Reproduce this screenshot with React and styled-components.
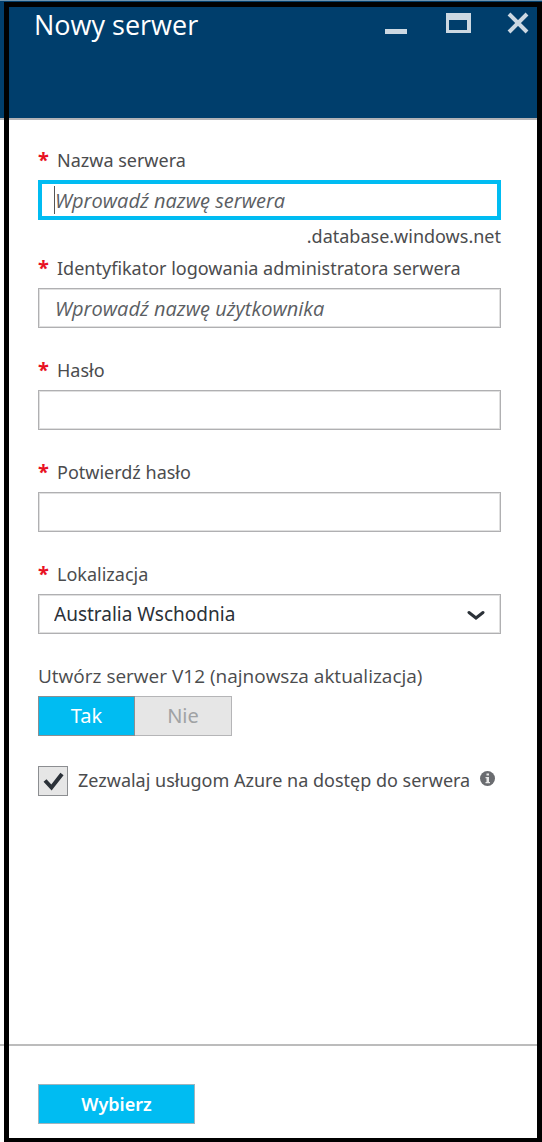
import React, { useState } from "react";
import styled, { createGlobalStyle } from "styled-components";

const GlobalStyle = createGlobalStyle`
  *, *::before, *::after { box-sizing: border-box; }
  body {
    margin: 0;
    background: #fff;
    color: #4b4c4e;
    font-family: "Noto Sans", "Open Sans", sans-serif;
    font-size: 18px;
    line-height: 28px;
  }
  input, select, button { font: inherit; }
`;

const Blade = styled.div`
  position: relative;
  display: flex;
  flex-direction: column;
  min-height: 100vh;
`;

const Outline = styled.div`
  position: absolute;
  inset: 2px 0 0 4px;
  border: 5px solid #000;
  border-bottom-width: 4px;
  pointer-events: none;
`;

const Header = styled.header`
  display: flex;
  justify-content: space-between;
  align-items: flex-start;
  min-height: 120px;
  padding: 7px 13px 0 34px;
  background: #003e6c;
  border-top: 1px solid #6d93ae;
  border-bottom: 2px solid #b2b2b6;
`;

const Title = styled.h1`
  margin: 0;
  color: #fff;
  font-family: "Open Sans", "Noto Sans", sans-serif;
  font-size: 27px;
  font-weight: 400;
  line-height: 34px;
`;

const WindowControls = styled.div`
  display: flex;
  gap: 36px;
  padding-top: 3px;
`;

const IconButton = styled.button`
  display: flex;
  padding: 0;
  border: 0;
  background: none;
  color: #ccd8e2;
`;

const Form = styled.main`
  flex: 1;
  padding: 26px 41px 26px 38px;
`;

const Field = styled.div`
  margin-bottom: ${(p) => (p.$tight ? "4px" : "28px")};
`;

const Label = styled.label`
  display: flex;
  gap: 9px;
  margin-bottom: 6px;
`;

const Required = styled.span`
  width: 10px;
  color: #e81123;
  font-size: 20px;
  font-weight: 700;
`;

const Control = styled.div`
  position: relative;
`;

const TextInput = styled.input`
  display: block;
  width: 100%;
  height: 40px;
  padding: 0 ${(p) => (p.$active ? "13px" : "16px")};
  border: ${(p) => (p.$active ? "4px solid #00bcf2" : "1px solid #b0b0b2")};
  border-radius: 0;
  outline: 0;
  background: #fff;
  box-shadow: ${(p) => (p.$active ? "none" : "inset 0 0 0 1px #e0e0e0")};
  color: #2b3138;
  font-size: 20px;
  &::placeholder {
    color: #5b5e63;
    font-family: "Open Sans", "Noto Sans", sans-serif;
    font-style: italic;
    opacity: 1;
  }
`;

const Caret = styled.span`
  position: absolute;
  top: 6px;
  left: 16px;
  width: 1px;
  height: 28px;
  background: #555;
`;

const Suffix = styled.div`
  margin-top: 2px;
  text-align: right;
`;

const Select = styled.select`
  display: block;
  width: 100%;
  height: 40px;
  padding: 0 48px 0 15px;
  border: 1px solid #b0b0b2;
  border-radius: 0;
  outline: 0;
  appearance: none;
  background: #fff;
  box-shadow: inset 0 0 0 1px #e0e0e0;
  color: #2b3138;
  font-size: 19px;
`;

const Chevron = styled.svg`
  position: absolute;
  top: 16px;
  right: 16px;
  pointer-events: none;
`;

const Toggle = styled.fieldset`
  margin: 0 0 30px;
  padding: 0;
  border: 0;
`;

const Legend = styled.legend`
  margin-bottom: 6px;
  padding: 0;
  font-family: "Open Sans", "Noto Sans", sans-serif;
  font-size: 19px;
`;

const Options = styled.div`
  display: flex;
`;

const Option = styled.label`
  position: relative;
  display: flex;
  align-items: center;
  justify-content: center;
  width: 97px;
  height: 40px;
  border: 1px solid ${(p) => (p.$on ? "#8a8f92" : "#b5b5b7")};
  border-left-width: ${(p) => (p.$on ? "1px" : "0")};
  background: ${(p) => (p.$on ? "#00bcf2" : "#e6e6e6")};
  color: ${(p) => (p.$on ? "#fff" : "#a0a2a4")};
  font-size: 20px;
`;

const HiddenRadio = styled.input`
  position: absolute;
  inset: 0;
  margin: 0;
  opacity: 0;
`;

const CheckRow = styled.div`
  display: flex;
  align-items: flex-start;
  gap: 10px;
`;

const CheckBoxWrap = styled.span`
  position: relative;
  flex: none;
  width: 30px;
  height: 30px;
`;

const CheckBox = styled.input`
  display: block;
  width: 100%;
  height: 100%;
  margin: 0;
  border: 1px solid #8c8e91;
  appearance: none;
  background: #e6e6e6;
`;

const CheckMark = styled.svg`
  position: absolute;
  inset: 0;
  pointer-events: none;
`;

const CheckLabel = styled.label`
  white-space: nowrap;
`;

const InfoIcon = styled.svg`
  flex: none;
  margin-top: 5px;
`;

const Footer = styled.footer`
  padding: 38px 38px 18px;
  border-top: 2px solid #bcbcbc;
`;

const SubmitButton = styled.button`
  display: block;
  width: 157px;
  height: 40px;
  padding: 0;
  border: 1px solid #9fb4bd;
  background: #00bcf2;
  color: #fff;
  font-size: 18px;
  font-weight: 600;
`;

function RequiredLabel({ id, children }) {
  return (
    <Label htmlFor={id}>
      <Required aria-hidden="true">*</Required>
      {children}
    </Label>
  );
}

export default function App() {
  const [v12, setV12] = useState(true);
  const [allow, setAllow] = useState(true);

  return (
    <>
      <GlobalStyle />
      <Blade>
        <Header>
          <Title>Nowy serwer</Title>
          <WindowControls>
            <IconButton type="button" aria-label="Minimalizuj">
              <svg width="26" height="24" viewBox="0 0 26 24">
                <path d="M1 18h22v5h-22z" fill="currentColor" />
              </svg>
            </IconButton>
            <IconButton type="button" aria-label="Maksymalizuj">
              <svg width="25" height="24" viewBox="0 0 25 24">
                <path d="M0 2h25v20H0zM3 9v10h18V9z" fill="currentColor" fillRule="evenodd" />
              </svg>
            </IconButton>
            <IconButton type="button" aria-label="Zamknij">
              <svg width="22" height="24" viewBox="0 0 22 24">
                <path d="M2 3l18 18M20 3L2 21" stroke="currentColor" strokeWidth="4" />
              </svg>
            </IconButton>
          </WindowControls>
        </Header>

        <Form>
          <Field $tight>
            <RequiredLabel id="server">Nazwa serwera</RequiredLabel>
            <Control>
              <TextInput id="server" type="text" placeholder="Wprowadź nazwę serwera" $active />
              <Caret />
            </Control>
            <Suffix>.database.windows.net</Suffix>
          </Field>
          <Field>
            <RequiredLabel id="login">Identyfikator logowania administratora serwera</RequiredLabel>
            <TextInput id="login" type="text" placeholder="Wprowadź nazwę użytkownika" />
          </Field>
          <Field>
            <RequiredLabel id="password">Hasło</RequiredLabel>
            <TextInput id="password" type="password" />
          </Field>
          <Field>
            <RequiredLabel id="confirm">Potwierdź hasło</RequiredLabel>
            <TextInput id="confirm" type="password" />
          </Field>
          <Field>
            <RequiredLabel id="location">Lokalizacja</RequiredLabel>
            <Control>
              <Select id="location">
                <option>Australia Wschodnia</option>
              </Select>
              <Chevron width="18" height="12" viewBox="0 0 18 12" aria-hidden="true">
                <path d="M2 2.500l7 5.500 7-5.500" fill="none" stroke="#2b3138" strokeWidth="3" strokeLinecap="round" />
              </Chevron>
            </Control>
          </Field>

          <Toggle>
            <Legend>Utwórz serwer V12 (najnowsza aktualizacja)</Legend>
            <Options>
              <Option $on={v12}>
                <HiddenRadio type="radio" name="v12" checked={v12} onChange={() => setV12(true)} />
                Tak
              </Option>
              <Option $on={!v12}>
                <HiddenRadio type="radio" name="v12" checked={!v12} onChange={() => setV12(false)} />
                Nie
              </Option>
            </Options>
          </Toggle>

          <CheckRow>
            <CheckBoxWrap>
              <CheckBox id="allow" type="checkbox" checked={allow} onChange={(e) => setAllow(e.target.checked)} />
              {allow && (
                <CheckMark width="30" height="30" viewBox="0 0 30 30" aria-hidden="true">
                  <path d="M7 14.500l6.500 7L24 8" fill="none" stroke="#2b3138" strokeWidth="4" />
                </CheckMark>
              )}
            </CheckBoxWrap>
            <CheckLabel htmlFor="allow">Zezwalaj usługom Azure na dostęp do serwera</CheckLabel>
            <InfoIcon width="15" height="15" viewBox="0 0 15 15" aria-hidden="true">
              <circle cx="7.500" cy="7.500" r="7.500" fill="#6a6c70" />
              <path d="M6.500 2.500h2.500v2h-2.500zM5.500 6h3.500v5h1v1.300h-4.500v-1.300h1v-3.700h-1z" fill="#e8e8e8" />
            </InfoIcon>
          </CheckRow>
        </Form>

        <Footer>
          <SubmitButton type="button">Wybierz</SubmitButton>
        </Footer>
        <Outline />
      </Blade>
    </>
  );
}
